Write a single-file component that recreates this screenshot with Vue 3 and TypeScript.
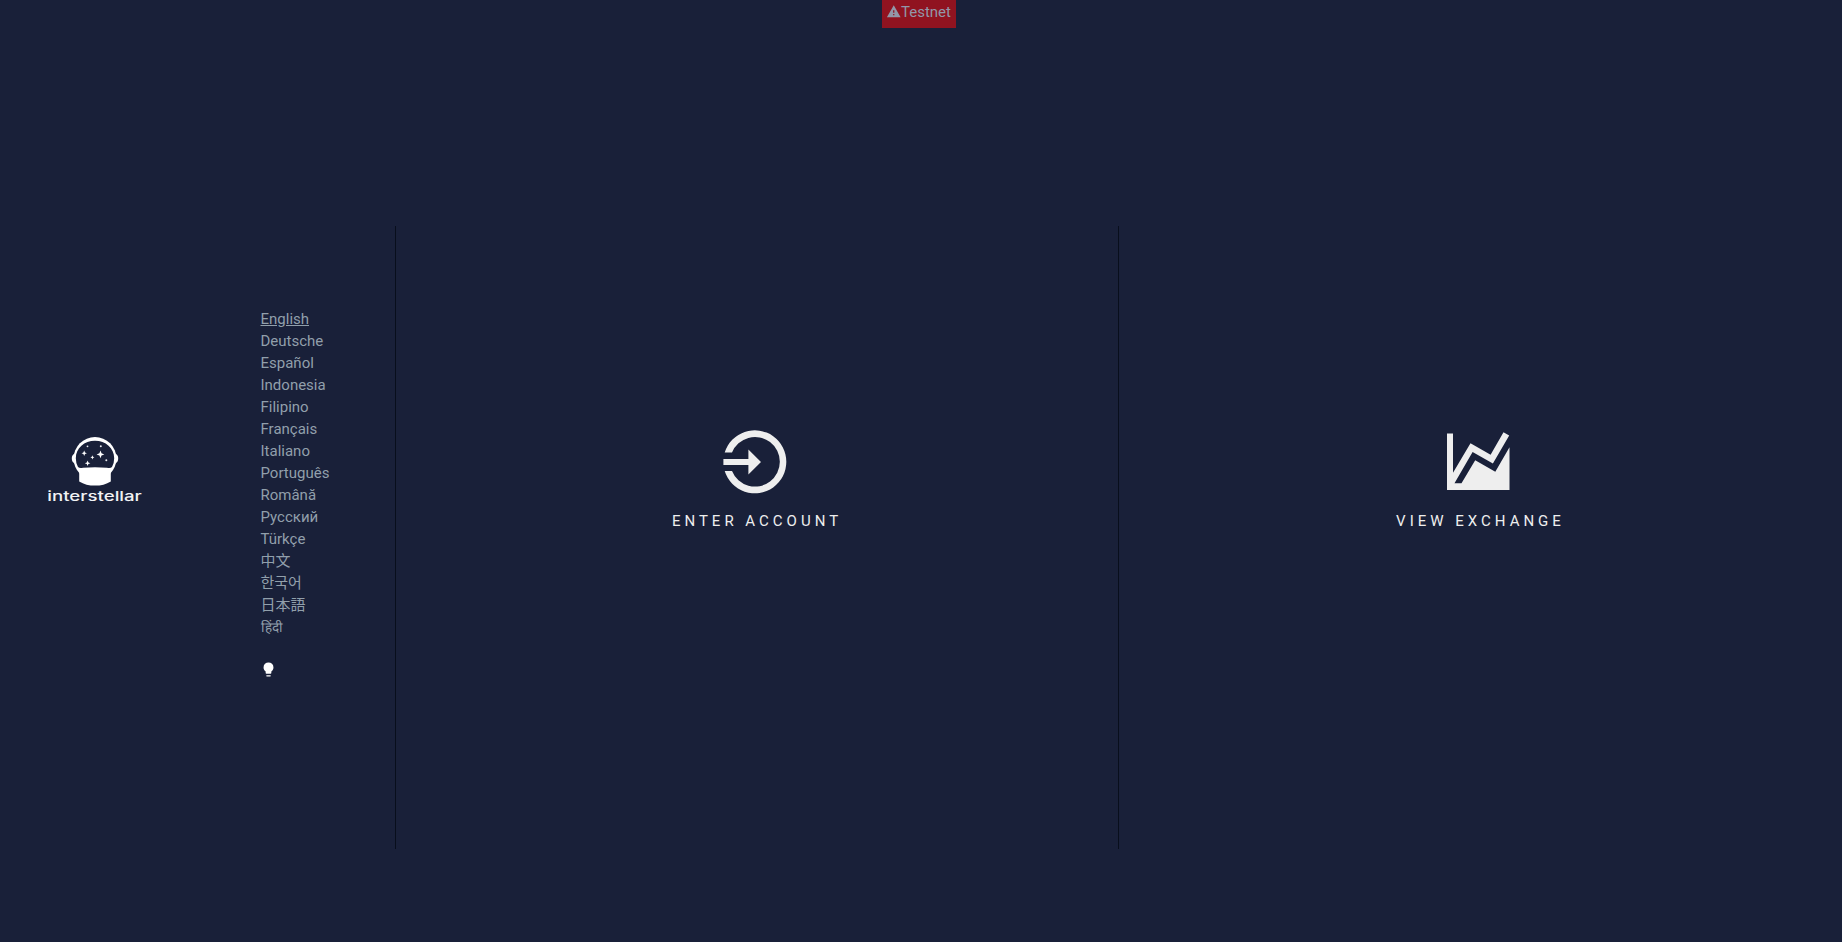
<script setup lang="ts">
import { ref } from 'vue'

interface Language {
  code: string
  name: string
}

const languages: Language[] = [
  { code: 'en', name: 'English' },
  { code: 'de', name: 'Deutsche' },
  { code: 'es', name: 'Español' },
  { code: 'id', name: 'Indonesia' },
  { code: 'fil', name: 'Filipino' },
  { code: 'fr', name: 'Français' },
  { code: 'it', name: 'Italiano' },
  { code: 'pt', name: 'Português' },
  { code: 'ro', name: 'Română' },
  { code: 'ru', name: 'Русский' },
  { code: 'tr', name: 'Türkçe' },
  { code: 'zh', name: '中文' },
  { code: 'ko', name: '한국어' },
  { code: 'ja', name: '日本語' },
  { code: 'hi', name: 'हिंदी' },
]
const selected = ref('en')
</script>

<template>
  <div class="page">
    <div class="badge">
      <svg class="warn" viewBox="0 0 24 24"><path d="M13 14h-2V10h2M13 18h-2v-2h2M1 21h22L12 2z" /></svg>
      <span>Testnet</span>
    </div>
    <main class="landing">
      <aside class="side">
        <div class="brand">
          <svg class="logo" viewBox="0 0 110 80">
            <circle cx="55" cy="28.5" r="21.4" fill="#fff" />
            <path d="M35 23.5Q31.6 24.8 31.8 28.5Q31.8 32.3 35 33.7ZM75 23.5Q78.4 24.8 78.2 28.5Q78.2 32.3 75 33.7Z" fill="#fff" />
            <path d="M38 37Q35.8 33 35.8 28.2C35.8 18 44.4 10.7 55 10.7S74.2 18 74.2 28.2Q74.2 33 72 37Q70.5 38.6 67 37.8Q55 36.8 43 37.8Q39.5 38.6 38 37Z" fill="#192039" />
            <path d="M39.2 38H70.8V51.4Q64 55.6 55 55.6T39.2 51.4Z" fill="#fff" />
            <path d="M60.5 20.4L61.5 23.3L64.3 24.4L61.5 25.5L60.5 28.3L59.4 25.5L56.6 24.4L59.4 23.3ZM44.2 20.6L45 22.5L46.9 23.3L45 24.1L44.2 26L43.4 24.1L41.5 23.3L43.4 22.5ZM47.6 30.4L48.4 32.4L50.4 33.2L48.4 34L47.6 36L46.8 34L44.8 33.2L46.8 32.4ZM52.4 25.3L53 26.8L54.4 27.3L53 27.9L52.4 29.4L51.8 27.9L50.4 27.3L51.8 26.8Z" fill="#fff" />
            <g fill="#e8e9ee">
              <circle cx="47.5" cy="16.3" r=".9" />
              <circle cx="60.8" cy="16.3" r="1" />
              <circle cx="66.3" cy="30.3" r="1" />
            </g>
            <text class="wordmark" transform="translate(7.3 70.6) scale(1.5 1)" textLength="63" lengthAdjust="spacingAndGlyphs">interstellar</text>
          </svg>
        </div>
        <nav class="languages">
          <a
            v-for="lang in languages"
            :key="lang.code"
            :lang="lang.code"
            :class="{ active: lang.code === selected, compact: lang.code === 'hi' }"
            @click="selected = lang.code"
          >{{ lang.name }}</a>
          <svg class="bulb" viewBox="0 0 24 24"><path d="M12 2A7 7 0 0 0 5 9C5 11.38 6.19 13.47 8 14.74V17A1 1 0 0 0 9 18H15A1 1 0 0 0 16 17V14.74C17.81 13.47 19 11.38 19 9A7 7 0 0 0 12 2M9 21A1 1 0 0 0 10 22H14A1 1 0 0 0 15 21V20H9Z" /></svg>
        </nav>
      </aside>
      <section class="choice">
        <svg class="icon" viewBox="0 0 64 64">
          <path d="M1.7 22.6A31.5 31.5 0 1 1 1.7 41H9A24.8 24.8 0 1 0 9 22.6Z" />
          <path d="M.4 29H25.4V19.6L38 32L25.4 44.4V35H.4Z" />
        </svg>
        <span class="label">ENTER ACCOUNT</span>
      </section>
      <section class="choice">
        <svg class="icon" viewBox="0 0 64 64">
          <path d="M1 3.4H7V42.7L24.5 13.2L44.6 24.8L57.5 2.2L63.2 5.5L46.9 33.5L26.6 21.9L8.5 53.3H15.5L29.2 30.2L49.3 41.8L63.5 17.3V60H1Z" />
        </svg>
        <span class="label">VIEW EXCHANGE</span>
      </section>
    </main>
  </div>
</template>

<style>
body { margin: 0; background: #192039; overflow: hidden; }
</style>

<style scoped>
.page {
  height: 942px;
  box-sizing: border-box;
  display: flex;
  flex-direction: column;
  background: #192039;
  font-family: Roboto, "Noto Sans CJK SC", "Noto Sans CJK KR", sans-serif;
  font-size: 15px;
}
.badge {
  align-self: center;
  box-sizing: border-box;
  width: 74px;
  height: 28px;
  margin-right: 5px;
  padding: 0 0 4px 4px;
  display: flex;
  align-items: center;
  background: #901320;
  color: #9297a8;
}
.warn { width: 15.5px; height: 15px; margin-top: -1px; fill: currentColor; flex: none; }
.landing {
  height: 623px;
  margin-top: 198px;
  display: grid;
  grid-template-columns: 395px 723px 1fr;
}
.side { display: flex; }
.brand { width: 260.5px; padding: 204px 0 0 40px; box-sizing: border-box; }
.logo { width: 110px; height: 80px; display: block; }
.wordmark { font: 500 13px Inter, sans-serif; fill: #f2f3f5; }
.languages {
  padding-top: 82px;
  display: flex;
  flex-direction: column;
  align-items: flex-start;
  color: #919fab;
}
.languages a { height: 22px; line-height: 22px; cursor: pointer; white-space: nowrap; }
.languages a.active { text-decoration: underline; }
.languages a.compact { font-size: 13.5px; }
.bulb { width: 17px; height: 17px; margin: 23px 0 0 -1px; fill: #fff; }
.choice {
  box-sizing: border-box;
  border-left: 1px solid #080e1c;
  padding-top: 204px;
  display: flex;
  flex-direction: column;
  align-items: center;
  color: #eee;
}
.icon { width: 64px; height: 64px; margin-right: 5px; fill: #eee; }
.label { margin-top: 16px; line-height: 22px; letter-spacing: 4px; white-space: nowrap; }
</style>
